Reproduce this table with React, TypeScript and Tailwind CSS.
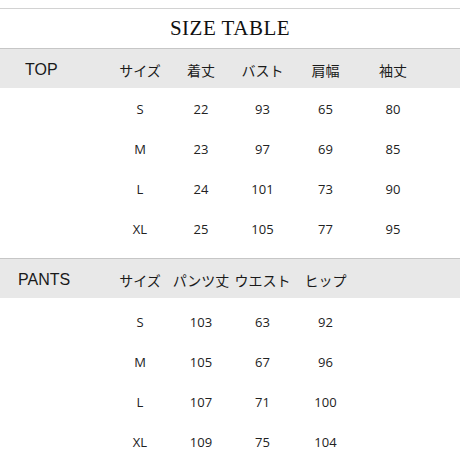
const top = {
  label: 'TOP',
  heads: ['サイズ', '着丈', 'バスト', '肩幅', '袖丈'],
  rows: [
    ['S', '22', '93', '65', '80'],
    ['M', '23', '97', '69', '85'],
    ['L', '24', '101', '73', '90'],
    ['XL', '25', '105', '77', '95'],
  ],
};

const pants = {
  label: 'PANTS',
  heads: ['サイズ', 'パンツ丈', 'ウエスト', 'ヒップ'],
  rows: [
    ['S', '103', '63', '92'],
    ['M', '105', '67', '96'],
    ['L', '107', '71', '100'],
    ['XL', '109', '75', '104'],
  ],
};

const widths = ['w-[60px]', 'w-[62px]', 'w-[61px]', 'w-[65px]', 'w-[70px]'];

const jp = { fontFamily: '"Noto Sans CJK JP", "Noto Sans", sans-serif' };

function Section({ data, labelPad, gap }: { data: typeof top; labelPad: string; gap: string }) {
  return (
    <div className="flex flex-col shrink-0">
      <div className="flex items-center shrink-0 h-[40px] pt-[3px] bg-[#e8e8e8] border-t border-[#c6c6c6]">
        <div
          className={`w-[110px] ${labelPad} text-[16px] text-[#1a1a1a]`}
          style={{ fontFamily: '"Liberation Sans", Arial, sans-serif' }}
        >
          {data.label}
        </div>
        {data.heads.map((h, i) => (
          <div key={h} className={`${widths[i]} text-center text-[14px] text-[#1a1a1a] whitespace-nowrap`} style={jp}>
            {h}
          </div>
        ))}
      </div>
      <div className={`flex flex-col shrink-0 ${gap}`}>
        {data.rows.map((r) => (
          <div key={r[0]} className="flex items-center h-[40px] shrink-0">
            <div className="w-[110px]" />
            {r.map((c, i) => (
              <div
                key={i}
                className={`${widths[i]} text-center text-[13px] text-[#222]`}
                style={{ fontFamily: '"Open Sans", "Noto Sans", sans-serif' }}
              >
                {c}
              </div>
            ))}
          </div>
        ))}
      </div>
    </div>
  );
}

export default function App() {
  return (
    <div className="w-[460px] h-[460px] bg-white overflow-hidden flex flex-col">
      <div className="h-[8px] shrink-0" />
      <div className="h-[40px] shrink-0 border-t border-[#d2d2d2] flex items-center justify-center">
        <span
          className="text-[21px] text-[#111] tracking-[0.5px]"
          style={{ fontFamily: '"Liberation Serif", "Times New Roman", serif' }}
        >
          SIZE TABLE
        </span>
      </div>
      <Section data={top} labelPad="pl-[25px]" gap="pt-[2px] pb-[8px]" />
      <Section data={pants} labelPad="pl-[18px]" gap="pt-[5px]" />
    </div>
  );
}
